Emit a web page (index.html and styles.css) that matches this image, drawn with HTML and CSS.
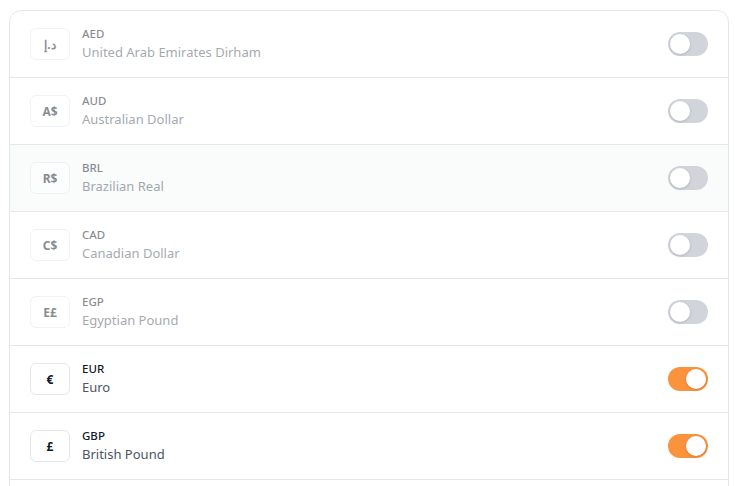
FILE: index.html
```html
<!DOCTYPE html>
<html>
    <head>
        <title>Currencies</title>
        <link rel="stylesheet" href="styles.css">
    </head>
    <body>
        <div class="card">
            <div class="row off">
                <div class="info">
                    <div class="symbol">د.إ</div>
                    <div class="names">
                        <div class="code">AED</div>
                        <div class="name">United Arab Emirates Dirham</div>
                    </div>
                </div>
                <span class="switch"><span class="knob"></span></span>
            </div>
            <div class="row off">
                <div class="info">
                    <div class="symbol">A$</div>
                    <div class="names">
                        <div class="code">AUD</div>
                        <div class="name">Australian Dollar</div>
                    </div>
                </div>
                <span class="switch"><span class="knob"></span></span>
            </div>
            <div class="row off hover">
                <div class="info">
                    <div class="symbol">R$</div>
                    <div class="names">
                        <div class="code">BRL</div>
                        <div class="name">Brazilian Real</div>
                    </div>
                </div>
                <span class="switch"><span class="knob"></span></span>
            </div>
            <div class="row off">
                <div class="info">
                    <div class="symbol">C$</div>
                    <div class="names">
                        <div class="code">CAD</div>
                        <div class="name">Canadian Dollar</div>
                    </div>
                </div>
                <span class="switch"><span class="knob"></span></span>
            </div>
            <div class="row off">
                <div class="info">
                    <div class="symbol">E£</div>
                    <div class="names">
                        <div class="code">EGP</div>
                        <div class="name">Egyptian Pound</div>
                    </div>
                </div>
                <span class="switch"><span class="knob"></span></span>
            </div>
            <div class="row">
                <div class="info">
                    <div class="symbol">€</div>
                    <div class="names">
                        <div class="code">EUR</div>
                        <div class="name">Euro</div>
                    </div>
                </div>
                <span class="switch on"><span class="knob"></span></span>
            </div>
            <div class="row">
                <div class="info">
                    <div class="symbol">£</div>
                    <div class="names">
                        <div class="code">GBP</div>
                        <div class="name">British Pound</div>
                    </div>
                </div>
                <span class="switch on"><span class="knob"></span></span>
            </div>
        </div>
    </body>
</html>
```

FILE: styles.css
```css
body{
    margin:0;
    padding:10px 6px 0 9px;
    background-color:#fff;
    font-family:"Noto Sans","Open Sans",sans-serif;
    overflow:hidden;
}
.card{
    min-height:520px;
    border:1px solid #e5e7eb;
    border-radius:12px;
    background-color:#fff;
}
.row{
    display:flex;
    align-items:center;
    justify-content:space-between;
    height:66px;
    padding:0 20px;
    border-bottom:1px solid #e5e7eb;
}
.row.hover{
    background-color:#fafbfb;
}
.info{
    display:flex;
    align-items:center;
    gap:12px;
}
.off .info{
    opacity:.5;
}
.symbol{
    width:38px;
    height:30px;
    border:1px solid #e5e7eb;
    border-radius:6px;
    background-color:#fff;
    display:flex;
    align-items:center;
    justify-content:center;
    font-size:12px;
    font-weight:700;
    color:#111827;
}
.code{
    font-size:11.5px;
    font-weight:500;
    line-height:16px;
    color:#111827;
}
.name{
    font-size:13px;
    line-height:21px;
    color:#4b5563;
}
.switch{
    position:relative;
    width:40px;
    height:24px;
    border-radius:12px;
    background-color:#d1d5db;
}
.switch.on{
    background-color:#fb923c;
}
.knob{
    position:absolute;
    top:2px;
    left:2px;
    width:20px;
    height:20px;
    border-radius:50%;
    background-color:#fff;
    box-shadow:0 1px 3px rgba(0,0,0,.15);
}
.on .knob{
    left:18px;
}
```
